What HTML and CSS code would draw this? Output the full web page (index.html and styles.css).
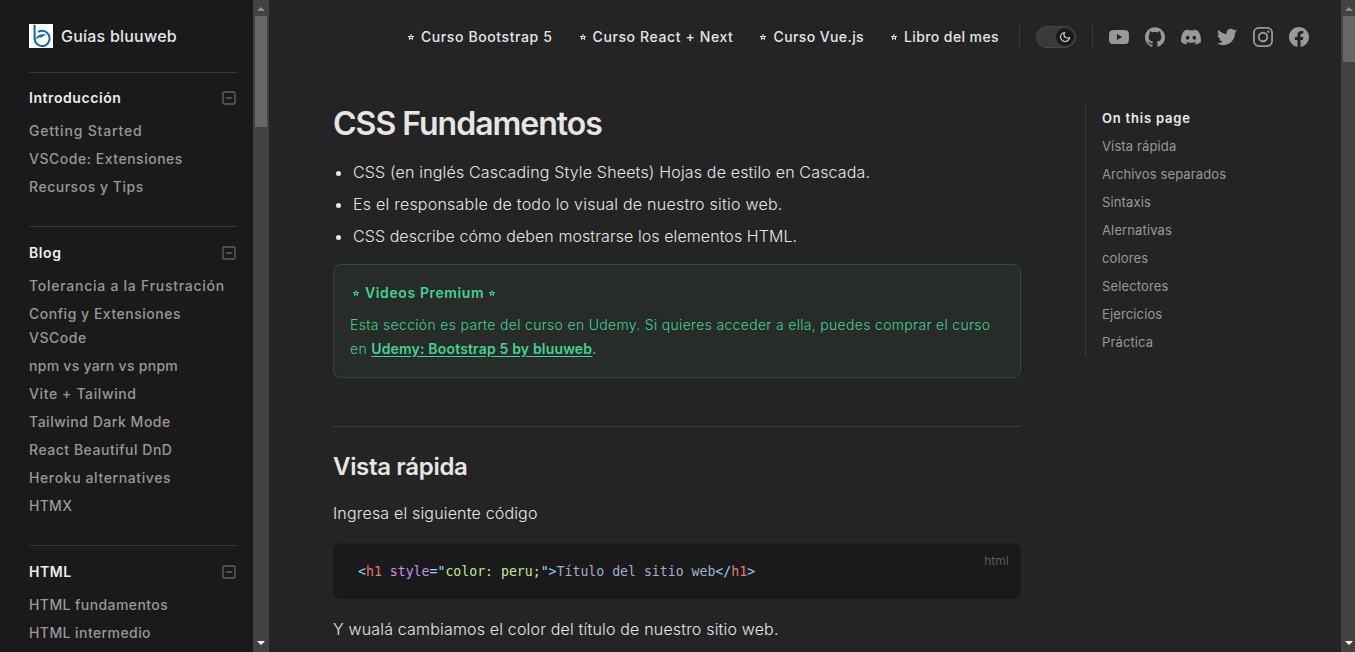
FILE: index.html
```html
<!DOCTYPE html>
<html lang="es">
<head>
<meta charset="utf-8">
<title>CSS Fundamentos | Guías bluuweb</title>
<link rel="stylesheet" href="styles.css">
</head>
<body>
<svg class="defs" aria-hidden="true">
  <symbol id="star" viewBox="0 0 8 8"><path d="M4 1v2M1 3.5h6M2.5 4v2.8M5.5 4v2.8M2.5 6 4 5.2 5.5 6" fill="none" stroke="currentColor" stroke-width="1"/></symbol>
  <symbol id="minus" viewBox="0 0 24 24"><path fill-rule="evenodd" d="M19 2H5C3.3 2 2 3.3 2 5v14c0 1.7 1.3 3 3 3h14c1.7 0 3-1.3 3-3V5c0-1.7-1.3-3-3-3zm1 17c0 .6-.4 1-1 1H5c-.6 0-1-.4-1-1V5c0-.6.4-1 1-1h14c.6 0 1 .4 1 1v14z"/><path d="M16 11H8c-.6 0-1 .4-1 1s.4 1 1 1h8c.6 0 1-.4 1-1s-.4-1-1-1z"/></symbol>
</svg>
<aside class="sidebar">
  <div class="brand">
    <svg class="logo" viewBox="0 0 24 24"><path fill="#fff" d="M0 0h24v24H0z"/><path fill="none" stroke="#14699c" stroke-width="2" d="M5.600.8v13.500a7.500 7.700 0 1 0 3.600-6.500"/><path fill="#14699c" d="M6.300 15.800C7.500 11.500 12 9.300 17.800 10.800c-3.300.5-3.800 2.600-6.300 2.600-1.900 0-3.700.4-5.200 2.400z"/></svg>
    <span>Guías bluuweb</span>
  </div>
  <section class="group">
    <h2><span>Introducción</span><svg><use href="#minus"/></svg></h2>
    <a class="wider">Getting Started</a><a>VSCode: Extensiones</a><a>Recursos y Tips</a>
  </section>
  <section class="group">
    <h2><span>Blog</span><svg><use href="#minus"/></svg></h2>
    <a class="wide">Tolerancia a la Frustración</a><a>Config y Extensiones<br>VSCode</a><a class="tight">npm vs yarn vs pnpm</a><a class="loose">Vite + Tailwind</a><a>Tailwind Dark Mode</a><a>React Beautiful DnD</a><a class="loose">Heroku alternatives</a><a class="tight">HTMX</a>
  </section>
  <section class="group">
    <h2><span>HTML</span><svg><use href="#minus"/></svg></h2>
    <a class="snug">HTML fundamentos</a><a class="snug">HTML intermedio</a>
  </section>
</aside>
<div class="scrollbar side-scroll"><i class="up"></i><b></b><i class="down"></i></div>
<div class="page">
  <header class="nav">
    <a class="loose"><svg class="star"><use href="#star"/></svg>Curso Bootstrap 5</a>
    <a class="loose"><svg class="star"><use href="#star"/></svg>Curso React + Next</a>
    <a><svg class="star"><use href="#star"/></svg>Curso Vue.js</a>
    <a><svg class="star"><use href="#star"/></svg>Libro del mes</a>
    <div class="appearance"><div class="switch"><span><svg viewBox="0 0 24 24"><path fill-rule="evenodd" d="M12.1 22h-.9c-5.500-.5-9.500-5.400-9-10.900.4-4.800 4.200-8.600 9-9 .4 0 .8.2 1 .5.2.3.2.8-.1 1.100-2 2.700-1.400 6.400 1.300 8.400 2.100 1.600 5 1.600 7.100 0 .3-.2.7-.3 1.100-.1.3.2.500.6.500 1-.2 2.700-1.500 5.100-3.600 6.800-1.900 1.400-4.100 2.200-6.400 2.200zM9.300 4.400c-2.900 1-5 3.600-5.200 6.800-.4 4.400 2.800 8.300 7.200 8.700 2.100.2 4.200-.4 5.800-1.800 1.100-.9 1.900-2.100 2.400-3.400-2.500.9-5.300.5-7.500-1.100-2.800-2.200-3.900-5.900-2.700-9.200z"/></svg></span></div></div>
    <div class="social">
      <svg viewBox="0 0 24 24"><path d="M23.498 6.186a3.016 3.016 0 0 0-2.122-2.136C19.505 3.545 12 3.545 12 3.545s-7.505 0-9.377.505A3.017 3.017 0 0 0 .502 6.186C0 8.070 0 12 0 12s0 3.930.502 5.814a3.016 3.016 0 0 0 2.122 2.136c1.871.505 9.376.505 9.376.505s7.505 0 9.377-.505a3.015 3.015 0 0 0 2.122-2.136C24 15.930 24 12 24 12s0-3.930-.502-5.814zM9.545 15.568V8.432L15.818 12l-6.273 3.568z"/></svg>
      <svg viewBox="0 0 24 24"><path d="M12 .297c-6.630 0-12 5.373-12 12 0 5.303 3.438 9.800 8.205 11.385.6.113.82-.258.82-.577 0-.285-.010-1.040-.015-2.040-3.338.724-4.042-1.610-4.042-1.610C4.422 18.070 3.633 17.700 3.633 17.700c-1.087-.744.084-.729.084-.729 1.205.084 1.838 1.236 1.838 1.236 1.070 1.835 2.809 1.305 3.495.998.108-.776.417-1.305.760-1.605-2.665-.300-5.466-1.332-5.466-5.930 0-1.310.465-2.380 1.235-3.220-.135-.303-.540-1.523.105-3.176 0 0 1.005-.322 3.300 1.230.960-.267 1.980-.399 3-.405 1.020.006 2.040.138 3 .405 2.280-1.552 3.285-1.230 3.285-1.230.645 1.653.240 2.873.120 3.176.765.840 1.230 1.910 1.230 3.220 0 4.610-2.805 5.625-5.475 5.920.420.360.810 1.096.810 2.220 0 1.606-.015 2.896-.015 3.286 0 .315.210.690.825.570C20.565 22.092 24 17.592 24 12.297c0-6.627-5.373-12-12-12"/></svg>
      <svg viewBox="0 0 24 24"><path d="M20.317 4.370a19.791 19.791 0 0 0-4.885-1.515.074.074 0 0 0-.079.037c-.210.375-.444.864-.608 1.250a18.270 18.270 0 0 0-5.487 0 12.640 12.640 0 0 0-.617-1.250.077.077 0 0 0-.079-.037A19.736 19.736 0 0 0 3.677 4.370a.070.070 0 0 0-.032.027C.533 9.046-.320 13.580.099 18.058a.082.082 0 0 0 .031.057 19.900 19.900 0 0 0 5.993 3.030.078.078 0 0 0 .084-.028 14.090 14.090 0 0 0 1.226-1.994.076.076 0 0 0-.041-.106 13.107 13.107 0 0 1-1.872-.892.077.077 0 0 1-.008-.128l.372-.292a.074.074 0 0 1 .077-.010c3.928 1.793 8.180 1.793 12.062 0a.074.074 0 0 1 .078.010l.373.292a.077.077 0 0 1-.006.127 12.299 12.299 0 0 1-1.873.892.077.077 0 0 0-.041.107c.360.698.772 1.362 1.225 1.993a.076.076 0 0 0 .084.028 19.839 19.839 0 0 0 6.002-3.030.077.077 0 0 0 .032-.054c.500-5.177-.838-9.674-3.549-13.660a.061.061 0 0 0-.031-.030zM8.020 15.330c-1.183 0-2.157-1.085-2.157-2.419s.956-2.419 2.157-2.419c1.210 0 2.176 1.096 2.157 2.420 0 1.333-.956 2.418-2.157 2.418zm7.975 0c-1.183 0-2.157-1.085-2.157-2.419s.955-2.419 2.157-2.419c1.210 0 2.176 1.096 2.157 2.420 0 1.333-.946 2.418-2.157 2.418z"/></svg>
      <svg viewBox="0 0 24 24"><path d="M23.953 4.570a10 10 0 0 1-2.825.775 4.958 4.958 0 0 0 2.163-2.723c-.951.555-2.005.959-3.127 1.184a4.920 4.920 0 0 0-8.384 4.482C7.690 8.095 4.067 6.130 1.640 3.162a4.822 4.822 0 0 0-.666 2.475c0 1.710.870 3.213 2.188 4.096a4.904 4.904 0 0 1-2.228-.616v.060a4.923 4.923 0 0 0 3.946 4.827 4.996 4.996 0 0 1-2.212.085 4.936 4.936 0 0 0 4.604 3.417 9.867 9.867 0 0 1-6.102 2.105c-.390 0-.779-.023-1.170-.067a13.995 13.995 0 0 0 7.557 2.209c9.053 0 13.998-7.496 13.998-13.985 0-.210 0-.420-.015-.630A9.935 9.935 0 0 0 24 4.590z"/></svg>
      <svg viewBox="0 0 24 24" class="insta"><rect x="1.100" y="1.100" width="21.800" height="21.800" rx="6"/><circle cx="12" cy="12" r="5.100"/><circle class="dot" cx="18.400" cy="5.600" r="1.440"/></svg>
      <svg viewBox="0 0 24 24"><path d="M24 12.073c0-6.627-5.373-12-12-12s-12 5.373-12 12c0 5.990 4.388 10.954 10.125 11.854v-8.385H7.078v-3.470h3.047V9.430c0-3.007 1.792-4.669 4.533-4.669 1.312 0 2.686.235 2.686.235v2.953H15.830c-1.491 0-1.956.925-1.956 1.874v2.250h3.328l-.532 3.470h-2.796v8.385C19.612 23.027 24 18.062 24 12.073z"/></svg>
    </div>
  </header>
  <div class="columns">
    <main class="doc">
      <h1>CSS Fundamentos</h1>
      <ul>
        <li>CSS (en inglés Cascading Style Sheets) Hojas de estilo en Cascada.</li>
        <li class="loose">Es el responsable de todo lo visual de nuestro sitio web.</li>
        <li class="snug">CSS describe cómo deben mostrarse los elementos HTML.</li>
      </ul>
      <div class="tip">
        <p class="tip-title"><svg class="star"><use href="#star"/></svg><span>Videos Premium</span><svg class="star"><use href="#star"/></svg></p>
        <p>Esta sección es parte del curso en Udemy. Si quieres acceder a ella, puedes comprar el curso</p>
        <p>en <a>Udemy: Bootstrap 5 by bluuweb</a><b>.</b></p>
      </div>
      <h2>Vista rápida</h2>
      <p class="para first">Ingresa el siguiente código</p>
      <div class="code"><pre><i class="c">&lt;</i><i class="r">h1</i> <i class="v">style</i><i class="c">="</i><i class="g">color: peru;</i><i class="c">"&gt;</i>Título del sitio web<i class="c">&lt;/</i><i class="r">h1</i><i class="c">&gt;</i></pre><span class="lang">html</span></div>
      <p class="para">Y wualá cambiamos el color del título de nuestro sitio web.</p>
    </main>
    <nav class="outline">
      <strong>On this page</strong>
      <a>Vista rápida</a><a>Archivos separados</a><a>Sintaxis</a><a>Alernativas</a><a>colores</a><a>Selectores</a><a>Ejercicios</a><a>Práctica</a>
    </nav>
  </div>
</div>
<div class="scrollbar main-scroll"><i class="up"></i><b></b><i class="down"></i></div>
</body>
</html>
```
FILE: styles.css
```css
* { box-sizing: border-box; }
body { margin: 0; height: 652px; overflow: hidden; display: flex; background: #242424; color: #e6e6e6; font-family: Inter, "Liberation Sans", sans-serif; }
h1, h2, p, ul, pre { margin: 0; }
.defs { position: absolute; width: 0; height: 0; }

.sidebar { flex: none; width: 253px; height: 652px; padding: 0 16px 0 29px; background: #1a1a1a; overflow: hidden; }
.brand { display: flex; align-items: center; gap: 8px; height: 72px; font-size: 16px; font-weight: 500; letter-spacing: .22px; }
.logo { width: 24px; height: 24px; }
.group { border-top: 1px solid #383838; padding: 11px 0 25px; font-size: 14px; line-height: 24px; font-weight: 500; letter-spacing: .52px; }
.group + .group { padding-top: 12px; }
.group h2 { display: flex; justify-content: space-between; align-items: center; height: 28px; margin-bottom: 5px; font-size: 14px; font-weight: 600; color: #ededed; letter-spacing: .57px; }
.group h2 svg { width: 16px; height: 16px; fill: #626262; }
.group a { display: block; padding: 2px 0; color: #989898; white-space: nowrap; }
.group .wider { letter-spacing: .82px; }
.group .wide { letter-spacing: .74px; }
.group .loose { letter-spacing: .61px; }
.group .snug { letter-spacing: .42px; }
.group .tight { letter-spacing: .28px; }

.scrollbar { flex: none; height: 652px; background: #424242; display: flex; flex-direction: column; align-items: center; }
.side-scroll { width: 16px; }
.main-scroll { width: 14px; padding-left: 2px; }
.scrollbar b { width: 12px; height: 111px; background: #686868; }
.main-scroll b { height: 46px; }
.scrollbar i { width: 8px; height: 4px; background: #8b8b8b; }
.scrollbar .up { margin: 7px 0 5px; clip-path: polygon(50% 0, 100% 100%, 0 100%); }
.scrollbar .down { margin: auto 0 7px; background: #fff; clip-path: polygon(0 0, 100% 0, 50% 100%); }

.page { flex: none; width: 1072px; height: 652px; overflow: hidden; }
.nav { display: flex; align-items: center; justify-content: flex-end; height: 73px; padding-right: 24px; font-size: 14px; font-weight: 500; letter-spacing: .4px; }
.nav a { display: flex; align-items: center; padding: 0 13px; white-space: nowrap; }
.nav .loose { letter-spacing: .61px; }
.star { flex: none; width: 8px; height: 8px; margin-right: 6px; }
.appearance { margin-left: 7px; padding: 0 16px; height: 24px; display: flex; align-items: center; border: solid #3c3c3c; border-width: 0 1px; }
.switch { width: 40px; height: 22px; border: 1px solid #484848; border-radius: 11px; background: #3a3a3a; display: flex; justify-content: flex-end; padding: 1px; }
.switch span { width: 18px; height: 18px; border-radius: 50%; background: #1a1a1a; display: flex; align-items: center; justify-content: center; }
.switch svg { width: 12px; height: 12px; fill: #e6e6e6; }
.social { display: flex; padding-left: 8px; }
.social svg { width: 36px; height: 20px; padding: 0 8px; fill: #999; }
.social .insta { fill: none; stroke: #999; stroke-width: 2.200; }
.insta .dot { fill: #999; stroke: none; }

.columns { display: flex; gap: 64px; padding: 31px 0 0 64px; }
.doc { width: 688px; font-weight: 300; }
.doc h1 { height: 40px; line-height: 40px; font-size: 32px; font-weight: 600; letter-spacing: -1px; }
.doc ul { margin-top: 12px; padding-left: 20px; font-size: 16px; line-height: 32px; letter-spacing: .167px; }
.doc li::marker { font-weight: 400; }
.doc .loose { letter-spacing: .23px; }
.doc .snug { letter-spacing: .075px; }
.tip { height: 114px; margin-top: 12px; padding: 16px; border: 1px solid #2b4c41; border-radius: 8px; background: #272b2a; color: #42d392; font-size: 14px; line-height: 24px; letter-spacing: .315px; }
.tip p { white-space: nowrap; }
.tip .tip-title { display: flex; align-items: center; margin-bottom: 8px; font-weight: 600; letter-spacing: .62px; }
.tip-title .star:first-child { margin: 0 5px 0 2px; }
.tip-title .star:last-child { margin: 0 0 0 4px; }
.tip a { font-weight: 600; letter-spacing: .17px; text-decoration: underline; text-underline-offset: 2px; }
.doc h2 { margin-top: 48px; padding-top: 24px; border-top: 1px solid #3c3c3c; font-size: 24px; line-height: 32px; font-weight: 600; letter-spacing: -.33px; }
.para { font-size: 16px; line-height: 28px; white-space: nowrap; letter-spacing: .175px; }
.first { margin-top: 16px; }
.code { display: flex; justify-content: space-between; height: 56px; margin: 16px 0; padding: 0 12px 0 25px; border-radius: 8px; background: #1a1a1a; }
.code pre { font: 13.200px/57px "DejaVu Sans Mono", monospace; color: #a6accd; letter-spacing: 0; }
.code i { font-style: normal; }
.c { color: #89ddff; } .r { color: #f07178; } .v { color: #c792ea; } .g { color: #c3e88d; }
.lang { margin-top: 8px; font-size: 12px; line-height: 20px; color: #6c6c6c; letter-spacing: .2px; }
.outline { height: 252px; padding-left: 16px; border-left: 1px solid #3c3c3c; font-size: 13px; line-height: 28px; color: #989898; letter-spacing: .13px; white-space: nowrap; }
.outline strong { display: block; font-weight: 600; color: #ededed; letter-spacing: .8px; }
.outline a { display: block; }
```
